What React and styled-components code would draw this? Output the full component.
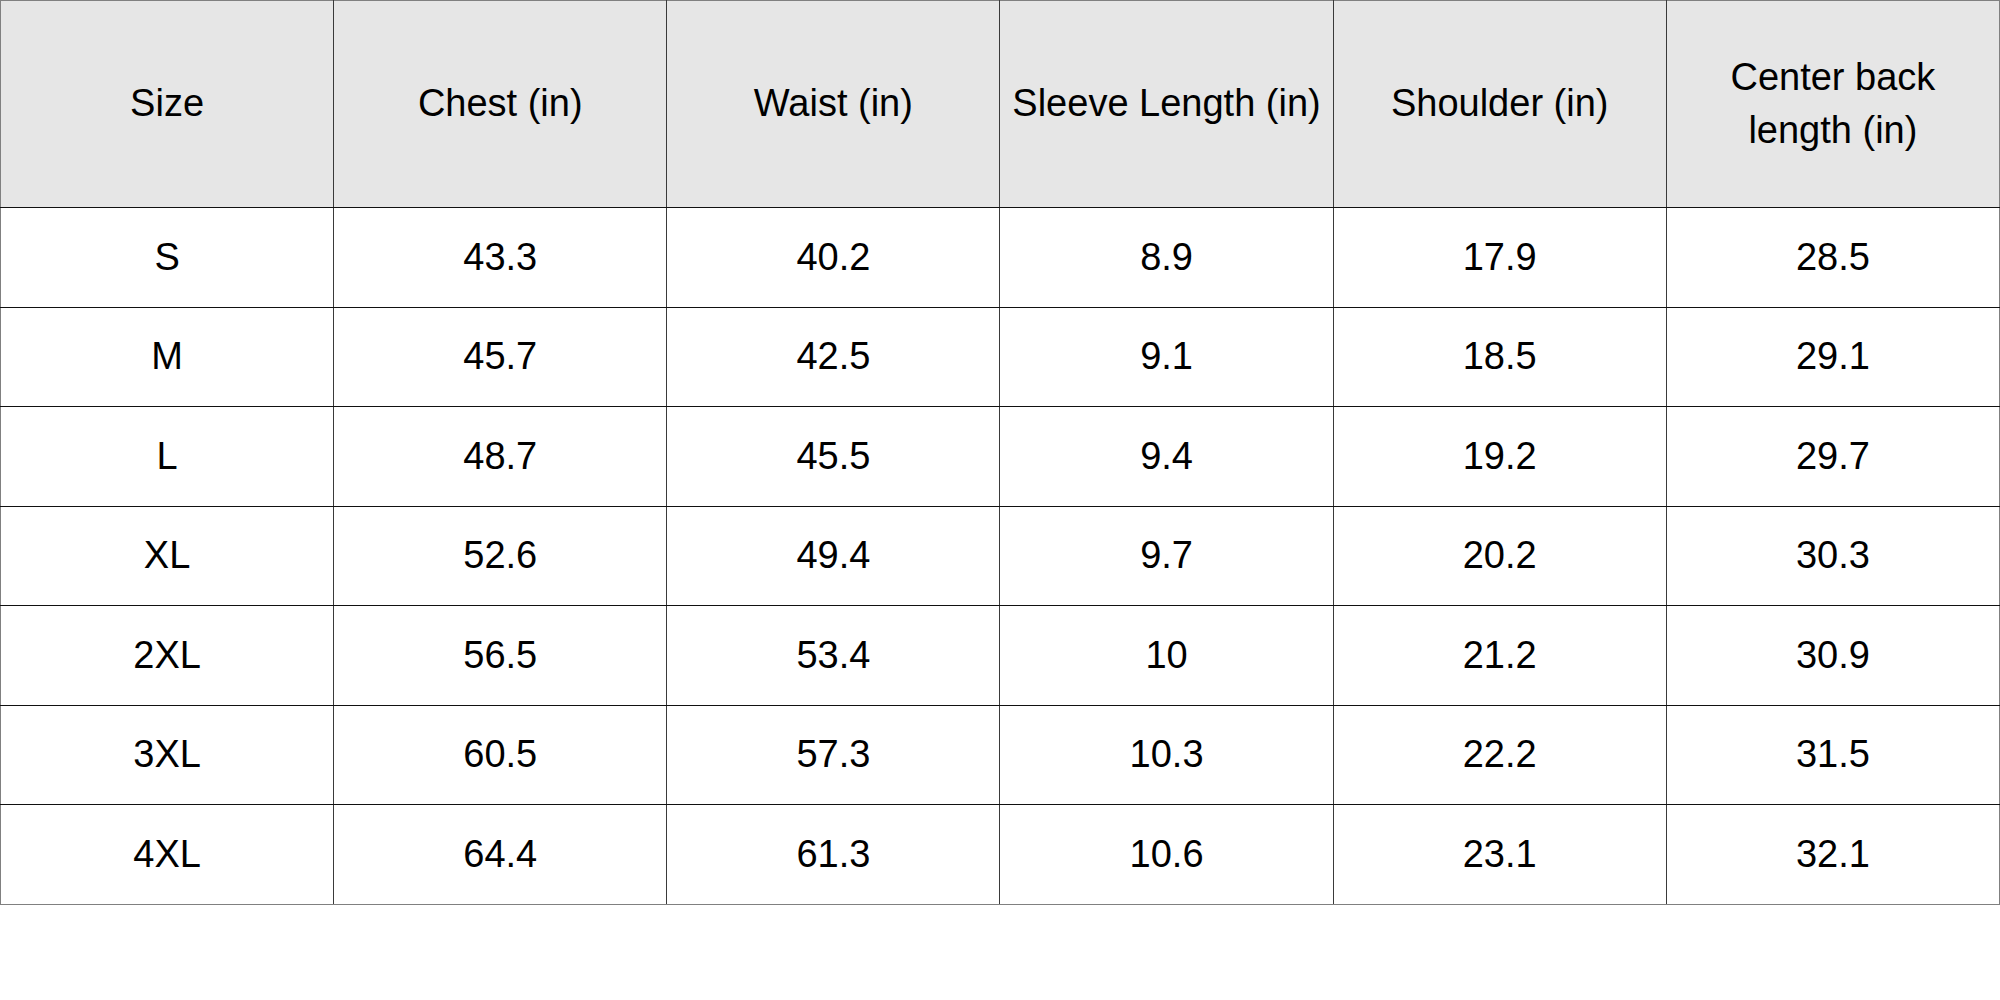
import React from "react";
import styled, { createGlobalStyle } from "styled-components";

const Global = createGlobalStyle`
  html, body { margin: 0; padding: 0; background: #ffffff; }
  body { font-family: "Liberation Sans", Arial, sans-serif; }
`;

const Table = styled.table`
  width: 2000px;
  table-layout: fixed;
  border-collapse: collapse;
  border: 1px solid #808080;
  font-family: "Liberation Sans", Arial, sans-serif;
  font-size: 38px;
  line-height: 1.4;
  color: #000;
`;

const HeadRow = styled.tr`
  height: 207px;
  background: #e6e6e6;
`;

const BodyRow = styled.tr`
  height: 99.5px;
`;

const HeadCell = styled.th`
  font-weight: normal;
  text-align: center;
  vertical-align: middle;
  padding: 0 8px;
  border-style: solid;
  border-width: 1px;
  border-color: #808080 #3a3a3a #111 #3a3a3a;
  &:first-child { border-left-color: #808080; }
  &:last-child { border-right-color: #808080; }
`;

const Cell = styled.td`
  text-align: center;
  vertical-align: middle;
  padding: 0 8px;
  border-style: solid;
  border-width: 1px;
  border-color: #111 #3a3a3a #111 #3a3a3a;
  &:first-child { border-left-color: #808080; }
  &:last-child { border-right-color: #808080; }
  tr:last-child > & { border-bottom-color: #808080; }
`;

const headers = [
  "Size",
  "Chest (in)",
  "Waist (in)",
  "Sleeve Length (in)",
  "Shoulder (in)",
  "Center back length (in)",
];

const rows = [
  ["S", "43.3", "40.2", "8.9", "17.9", "28.5"],
  ["M", "45.7", "42.5", "9.1", "18.5", "29.1"],
  ["L", "48.7", "45.5", "9.4", "19.2", "29.7"],
  ["XL", "52.6", "49.4", "9.7", "20.2", "30.3"],
  ["2XL", "56.5", "53.4", "10", "21.2", "30.9"],
  ["3XL", "60.5", "57.3", "10.3", "22.2", "31.5"],
  ["4XL", "64.4", "61.3", "10.6", "23.1", "32.1"],
];

export default function App() {
  return (
    <>
      <Global />
      <Table>
        <thead>
          <HeadRow>
            {headers.map((h) => (
              <HeadCell key={h}>{h}</HeadCell>
            ))}
          </HeadRow>
        </thead>
        <tbody>
          {rows.map((r) => (
            <BodyRow key={r[0]}>
              {r.map((v, i) => (
                <Cell key={i}>{v}</Cell>
              ))}
            </BodyRow>
          ))}
        </tbody>
      </Table>
    </>
  );
}
